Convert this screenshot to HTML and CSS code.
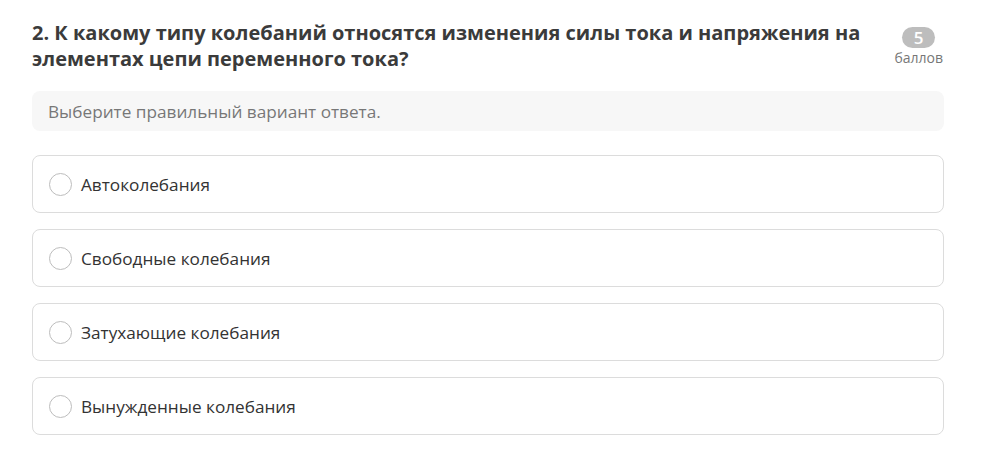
FILE: index.html
```html
<!DOCTYPE html>
<html lang="ru">
<head>
<meta charset="utf-8">
<link rel="stylesheet" href="styles.css">
</head>
<body>
<div class="quiz">
  <div class="head">
    <h2 class="title">2. К какому типу колебаний относятся изменения силы тока и напряжения на элементах цепи переменного тока?</h2>
    <div class="score">
      <span class="pill">5</span>
      <span class="unit">баллов</span>
    </div>
  </div>
  <div class="hint">Выберите правильный вариант ответа.</div>
  <div class="options">
    <label class="option"><span class="radio"></span><span class="text">Автоколебания</span></label>
    <label class="option"><span class="radio"></span><span class="text">Свободные колебания</span></label>
    <label class="option"><span class="radio"></span><span class="text">Затухающие колебания</span></label>
    <label class="option"><span class="radio"></span><span class="text">Вынужденные колебания</span></label>
  </div>
</div>
</body>
</html>
```
FILE: styles.css
```css
html, body { margin: 0; padding: 0; background: #fff; }
body { font-family: "Open Sans", sans-serif; color: #333; }
.quiz { width: 912px; padding: 20px 0 0 32px; }
.head { display: flex; align-items: flex-start; justify-content: space-between; }
.title {
  margin: 0; font-family: "Open Sans", sans-serif; font-weight: 700;
  font-size: 20px; line-height: 26px; color: #3b3b3b; width: 850px;
}
.score { display: flex; flex-direction: column; align-items: center; margin-top: 7px; margin-right: 1px; }
.pill {
  background: #bdbdbd; color: #fff; font-weight: 600; font-size: 17px;
  width: 33px; height: 21px; border-radius: 11px; display: flex; align-items: center; justify-content: center;
}
.unit { font-size: 14px; color: #777; line-height: 18px; margin-top: 1px; }
.hint {
  margin-top: 19px; background: #f7f7f7; border-radius: 8px; height: 40px;
  display: flex; align-items: center; padding-left: 16px; font-size: 17.2px; color: #777;
}
.options { display: flex; flex-direction: column; gap: 16px; margin-top: 24px; }
.option {
  height: 56px; border: 1px solid #dcdcdc; border-radius: 8px; display: flex; align-items: center;
  padding-left: 16px; cursor: pointer;
}
.radio { width: 21px; height: 21px; border: 1px solid #bdbdbd; border-radius: 50%; box-sizing: content-box; }
.text { margin-left: 9px; font-size: 17.2px; color: #333; }
```
